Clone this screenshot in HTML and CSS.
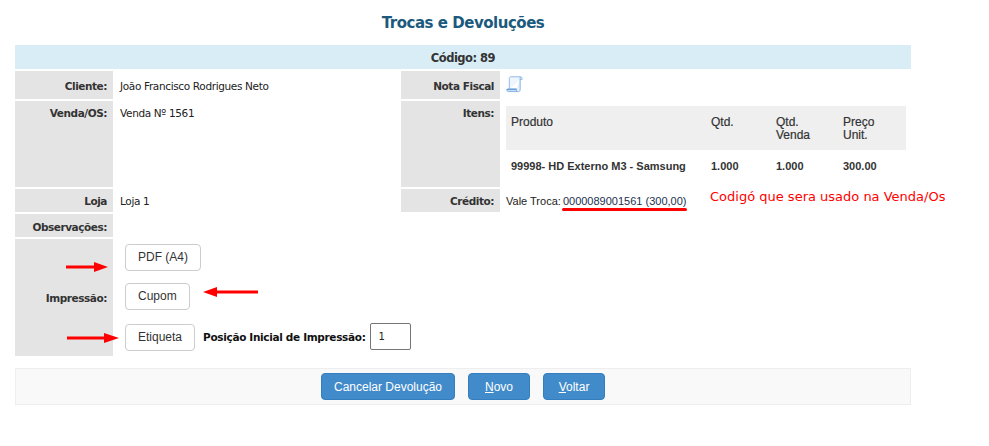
FILE: index.html
```html
<!DOCTYPE html>
<html lang="pt">
<head>
<meta charset="utf-8">
<title>Trocas e Devoluções</title>
<link rel="stylesheet" href="styles.css">
</head>
<body>
<main class="page">
  <h1 class="title">Trocas e Devoluções</h1>
  <div class="code">Código: 89</div>
  <div class="form">
    <div class="label">Cliente:</div>
    <div class="value">João Francisco Rodrigues Neto</div>
    <div class="label">Nota Fiscal</div>
    <div class="value value-icon">
      <svg class="doc" width="17" height="17" viewBox="0 0 18 18" aria-hidden="true">
        <path d="M3.5 14V2.500C3.500 1.400 4.200.8 5 .8h10.500c.9 0 1.500.7 1.500 1.500v1.500h-2.300" fill="#eef5fc" stroke="#8fb8e8"/>
        <path d="M15 1v13.500c0 1.200-.8 2-1.800 2H2.500c-1 0-1.800-.8-1.800-1.600 0-.9.8-1.400 1.800-1.400h8.500v3" fill="#e6f0fa" stroke="#7fb0e4"/>
        <path d="M1 14.500h10" stroke="#4f8bcc"/>
      </svg>
    </div>
    <div class="label label-top">Venda/OS:</div>
    <div class="value value-top">Venda Nº 1561</div>
    <div class="label label-top">Itens:</div>
    <div class="value value-items">
      <table class="items">
        <thead>
          <tr><th class="c1">Produto</th><th class="c2">Qtd.</th><th class="c3">Qtd.<br>Venda</th><th class="c4">Preço<br>Unit.</th></tr>
        </thead>
        <tbody>
          <tr><td>99998- HD Externo M3 - Samsung</td><td>1.000</td><td>1.000</td><td>300.00</td></tr>
        </tbody>
      </table>
    </div>
    <div class="label label-flush">Loja</div>
    <div class="value value-flush">Loja 1</div>
    <div class="label label-flush">Crédito:</div>
    <div class="value credit">Vale Troca: <span class="credit-code">0000089001561 (300,00)</span>
      <span class="underline"></span>
      <span class="note">Codigó que sera usado na Venda/Os</span>
    </div>
    <div class="label">Observações:</div>
    <div class="value wide"></div>
    <div class="label label-print">Impressão:</div>
    <div class="value wide print">
      <div class="print-row"><button class="btn" type="button">PDF (A4)</button></div>
      <div class="print-row"><button class="btn" type="button">Cupom</button></div>
      <div class="print-row">
        <button class="btn" type="button">Etiqueta</button>
        <label class="pos" for="pos">Posição Inicial de Impressão:</label>
        <input class="pos-input" id="pos" value="1">
      </div>
    </div>
  </div>
  <div class="actions">
    <button class="act" type="button">Cancelar Devolução</button>
    <button class="act act-short" type="button"><u>N</u>ovo</button>
    <button class="act act-short" type="button"><u>V</u>oltar</button>
  </div>
  <svg class="arrow arrow-a" width="42" height="10" viewBox="0 0 42 10" aria-hidden="true"><path d="M0 3.500h28V0l14 5-14 5V6.500H0z" fill="#f00"/></svg>
  <svg class="arrow arrow-b" width="55" height="10" viewBox="0 0 55 10" aria-hidden="true"><path d="M55 3.500H14V0L0 5l14 5V6.500h41z" fill="#f00"/></svg>
  <svg class="arrow arrow-c" width="52" height="10" viewBox="0 0 52 10" aria-hidden="true"><path d="M0 3.500h37V0l15 5-15 5V6.500H0z" fill="#f00"/></svg>
</main>
</body>
</html>
```
FILE: styles.css
```css
* { box-sizing: border-box; }
html, body { margin: 0; padding: 0; background: #fff; }
body { width: 989px; height: 446px; overflow: hidden; font-family: "DejaVu Sans", sans-serif; color: #333; }
.page { position: relative; width: 989px; height: 446px; padding: 0 78px 0 15px; }
.title { margin: 0; height: 45px; padding-top: 14px; text-align: center; font-size: 15px; line-height: 19px; font-weight: 700; color: #1c5a7d; letter-spacing: -.48px; }
.code { height: 24px; background: #d9edf7; text-align: center; font-size: 11.500px; line-height: 26px; font-weight: 700; letter-spacing: -.5px; margin-bottom: 2px; }
.form { display: grid; grid-template-columns: 98px 288px 99px 411px; grid-template-rows: 28px 86px 23px 23px 117px; row-gap: 2px; }
.label { display: flex; align-items: center; justify-content: flex-end; background: #e4e4e4; padding: 2px 6px 0 0; font-size: 10.500px; line-height: 14px; font-weight: 700; letter-spacing: -.45px; color: #333; }
.label-top { align-items: flex-start; padding-top: 5px; }
.label-flush { padding-top: 1px; }
.label-print { padding-top: 0; }
.value { display: flex; align-items: center; padding: 2px 0 0 7px; font-size: 10.500px; line-height: 13px; color: #222; letter-spacing: -.35px; }
.value-flush { padding-top: 1px; }
.value-top { align-items: flex-start; padding-top: 6px; }
.value-icon { align-items: flex-start; padding: 5px 0 0 6px; }
.doc { display: block; }
.value-items { align-items: flex-start; padding: 5px 0 0 6px; }
.wide { grid-column: 2 / 5; }
.items { width: 400px; border-collapse: collapse; font-family: "Liberation Sans", sans-serif; font-size: 11px; line-height: 13px; color: #333; table-layout: fixed; letter-spacing: 0; }
.items th { background: #efefef; height: 44px; padding: 10px 5px 0; text-align: left; vertical-align: top; font-size: 12px; font-weight: 400; -webkit-text-stroke: .2px #333; }
.items td { height: 32px; padding: 0 5px; font-weight: 700; vertical-align: middle; }
.c1 { width: 200px; } .c2 { width: 65px; } .c3 { width: 67px; } .c4 { width: 68px; }
.credit { position: relative; padding-left: 6px; font-family: "Liberation Sans", sans-serif; font-size: 11px; letter-spacing: 0; white-space: pre; }
.credit-code { color: #22304f; margin-left: -1px; }
.underline { position: absolute; left: 62px; top: 19px; width: 125px; height: 3px; border-radius: 2px; background: #f00; }
.note { position: absolute; left: 210px; top: 0; font-family: "DejaVu Sans", sans-serif; font-size: 13px; line-height: 16px; color: #f00; }
.print { display: block; padding: 5px 0 0 12px; font-family: "Liberation Sans", sans-serif; }
.print-row { display: flex; align-items: center; height: 27px; margin-bottom: 12px; }
.print-row:nth-child(2) { margin-bottom: 14px; }
.btn { height: 27px; padding: 0 12px 2px; border: 1px solid #ccc; border-radius: 4px; background: #fff; font: 12px "Liberation Sans", sans-serif; color: #333; }
.pos { margin: -1px 4px 0 8px; font-family: "DejaVu Sans", sans-serif; font-size: 10.500px; font-weight: 700; color: #111; letter-spacing: -.33px; }
.pos-input { width: 41px; height: 27px; margin-top: -3px; padding: 0 8px; border: 1px solid #767676; border-radius: 2px; font: 10px "DejaVu Sans", sans-serif; color: #222; background: #fff; }
.actions { display: flex; justify-content: center; gap: 13px; margin-top: 12px; height: 37px; padding-top: 4px; background: #f9f9f9; border: 1px solid #eee; }
.act { height: 27px; padding: 0 12px; border: 1px solid #357ebd; border-radius: 4px; background: #428bca; color: #fff; font: 12px "Liberation Sans", sans-serif; }
.act-short { width: 62px; padding: 0; }
.arrow { position: absolute; display: block; }
.arrow-a { left: 66px; top: 262px; }
.arrow-b { left: 203px; top: 287px; }
.arrow-c { left: 67px; top: 333px; }
```
